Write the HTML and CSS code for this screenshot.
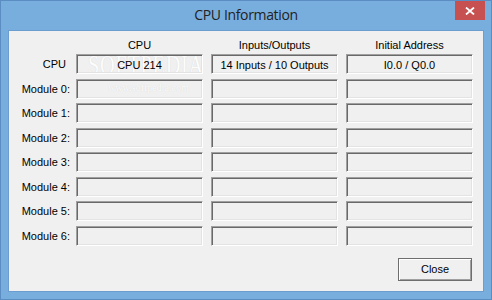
FILE: index.html
```html
<!DOCTYPE html>
<html lang="en">

<head>
    <meta charset="UTF-8">
    <title>CPU Information</title>
    <link rel="stylesheet" href="styles.css">
</head>

<body>
    <div class="window">
        <div class="titlebar">
            <span class="title">CPU Information</span>
            <div class="close-x">
                <svg width="10" height="8" viewBox="0 0 10 8">
                    <path d="M1 0.5 L9 7.5 M9 0.5 L1 7.5" stroke="#fff" stroke-width="1.8" />
                </svg>
            </div>
        </div>

        <div class="client">
            <!-- watermark, drawn under the fields -->
            <div class="watermark">
                <div class="wm-big">SOFTPEDIA</div>
                <div class="wm-small">www.softpedia.com</div>
            </div>

            <div class="heads">
                <div></div>
                <div class="head">CPU</div>
                <div class="head">Inputs/Outputs</div>
                <div class="head">Initial Address</div>
            </div>

            <div class="rows">
                <div class="label cpu-label">CPU</div>
                <div class="field">CPU 214</div>
                <div class="field">14 Inputs / 10 Outputs</div>
                <div class="field">I0.0 / Q0.0</div>

                <div class="label">Module 0:</div>
                <div class="field"></div>
                <div class="field"></div>
                <div class="field"></div>

                <div class="label">Module 1:</div>
                <div class="field"></div>
                <div class="field"></div>
                <div class="field"></div>

                <div class="label">Module 2:</div>
                <div class="field"></div>
                <div class="field"></div>
                <div class="field"></div>

                <div class="label">Module 3:</div>
                <div class="field"></div>
                <div class="field"></div>
                <div class="field"></div>

                <div class="label">Module 4:</div>
                <div class="field"></div>
                <div class="field"></div>
                <div class="field"></div>

                <div class="label">Module 5:</div>
                <div class="field"></div>
                <div class="field"></div>
                <div class="field"></div>

                <div class="label">Module 6:</div>
                <div class="field"></div>
                <div class="field"></div>
                <div class="field"></div>
            </div>

            <div class="actions">
                <button class="btn">Close</button>
            </div>
        </div>
    </div>
</body>

</html>
```

FILE: styles.css
```css
* {
    margin: 0;
    padding: 0;
    box-sizing: border-box;
}

body {
    width: 492px;
    height: 300px;
    overflow: hidden;
    font-family: "Liberation Sans", Arial, sans-serif;
    font-size: 11px;
    color: #000;
}

.window {
    width: 492px;
    height: 300px;
    background-color: #78aedd;
    border: 1px solid #5b8dc3;
}

.titlebar {
    position: relative;
    height: 29px;
    display: flex;
    justify-content: center;
    align-items: center;
}

.title {
    font-family: "Open Sans", "Noto Sans", sans-serif;
    font-size: 14px;
    letter-spacing: -0.35px;
    color: #222;
    margin-top: -3px;
}

.close-x {
    position: absolute;
    top: 0;
    right: 6px;
    width: 30px;
    height: 19px;
    background-color: #c75050;
    display: flex;
    justify-content: center;
    align-items: center;
}

.client {
    position: relative;
    width: 476px;
    height: 262px;
    margin-left: 7px;
    background-color: #f0f0f0;
    border: 1px solid #6c9dd0;
    padding-top: 7px;
}

.heads,
.rows {
    position: relative;
    display: grid;
    grid-template-columns: 59px repeat(3, 127px);
    column-gap: 8px;
}

.head {
    height: 14px;
    line-height: 14px;
    text-align: center;
}

.rows {
    margin-top: 2px;
    grid-auto-rows: 20px;
    row-gap: 4.57px;
}

.label {
    display: flex;
    align-items: center;
    justify-content: flex-end;
    margin-right: -2px;
    white-space: nowrap;
}

.cpu-label {
    padding-right: 4px;
}

.field {
    display: flex;
    align-items: center;
    justify-content: center;
    white-space: nowrap;
    border: 1px solid;
    border-color: #a0a0a0 #fff #fff #a0a0a0;
    box-shadow: inset 1px 1px #696969, inset -1px -1px #e3e3e3;
    padding-top: 1px;
}

.actions {
    display: flex;
    justify-content: flex-end;
    margin-top: 12px;
    padding-right: 11px;
}

.btn {
    width: 74px;
    height: 23px;
    font-family: "Liberation Sans", Arial, sans-serif;
    font-size: 11px;
    color: #000;
    background-color: #f0f0f0;
    border: 1px solid #6e6e6e;
    box-shadow: inset 1px 1px #fff, inset -1px -1px #a0a0a0;
}

.watermark {
    position: absolute;
    left: 79px;
    top: 23px;
    pointer-events: none;
    color: #fcfcfc;
    text-shadow: 0 0 1px #d0d0d0;
}

.wm-big {
    font-family: "Liberation Serif", serif;
    font-size: 27px;
    line-height: 22px;
    letter-spacing: 1px;
    transform: scaleX(0.75);
    transform-origin: left;
}

.wm-small {
    margin-top: 5px;
    margin-left: 20px;
    font-family: "Liberation Serif", serif;
    font-size: 11px;
    line-height: 12px;
    transform: scaleX(0.92);
    transform-origin: left;
}
```
